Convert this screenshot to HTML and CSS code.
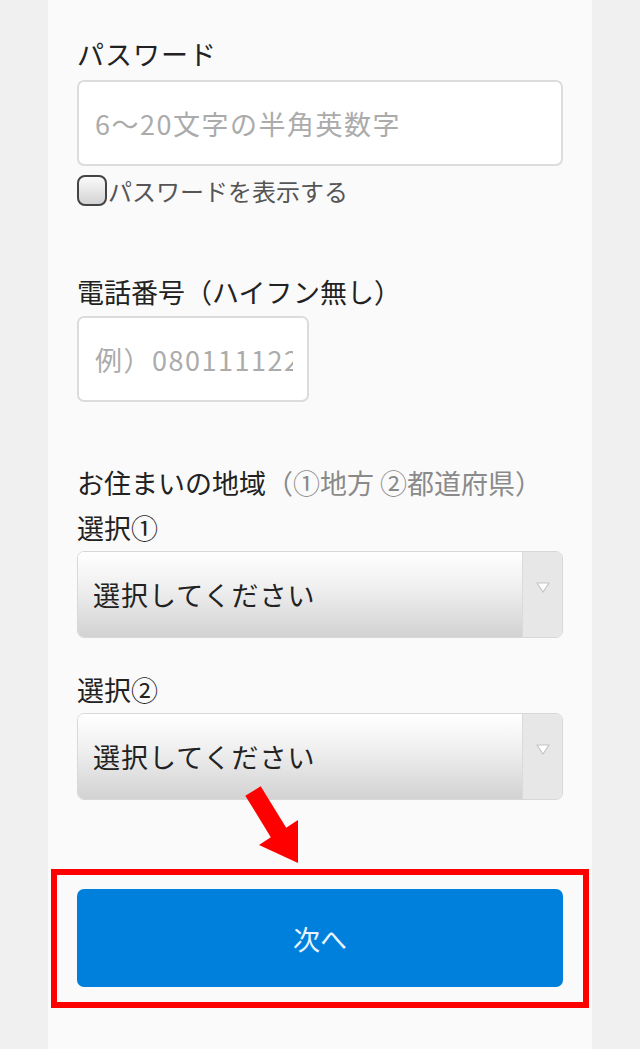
FILE: index.html
```html
<!DOCTYPE html>
<html lang="ja">
<head>
<meta charset="utf-8">
<title>登録</title>
<link rel="stylesheet" href="styles.css">
</head>
<body>
<div class="panel">
  <label class="label pw-label">パスワード</label>
  <input class="text-input" type="text" placeholder="6〜20文字の半角英数字">
  <label class="show-pass"><span class="checkbox"></span>パスワードを表示する</label>

  <label class="label phone-label">電話番号（ハイフン無し）</label>
  <input class="text-input phone-input" type="text" placeholder="例）08011112222">

  <div class="label region-label">お住まいの地域<span class="muted">（①地方 ②都道府県）</span></div>
  <div class="label sub-label">選択①</div>
  <div class="select">
    <div class="select-text">選択してください</div>
    <div class="select-btn"><svg width="14" height="11" viewBox="0 0 14 11"><polygon points="1,1 13,1 7,10" fill="#fff" stroke="#c4c4c4" stroke-width="1.2" stroke-linejoin="round"/></svg></div>
  </div>
  <div class="label sub-label second">選択②</div>
  <div class="select">
    <div class="select-text">選択してください</div>
    <div class="select-btn"><svg width="14" height="11" viewBox="0 0 14 11"><polygon points="1,1 13,1 7,10" fill="#fff" stroke="#c4c4c4" stroke-width="1.2" stroke-linejoin="round"/></svg></div>
  </div>

  <div class="next-box">
    <div class="next-btn">次へ</div>
  </div>

  <svg class="arrow" width="100" height="100" viewBox="0 0 100 100">
    <polygon points="15.3,15.7 30.7,6.3 56.2,47.8 68,40 68,83 29,65 40.8,57.2" fill="#ff0000"/>
  </svg>
</div>
</body>
</html>
```

FILE: styles.css
```css
html, body {
  margin: 0;
  padding: 0;
}
body {
  background: #f0f0f0;
  font-family: "Noto Sans CJK JP", "Noto Sans", sans-serif;
}
.panel {
  position: relative;
  margin: 0 48px;
  background: #fafafa;
  min-height: 1049px;
  box-sizing: border-box;
  padding: 36px 29px 0;
}
.label {
  display: block;
  font-size: 27px;
  line-height: 36px;
  color: #222;
}
.pw-label {
  margin-bottom: 8px;
  letter-spacing: 1px;
}
.text-input {
  display: block;
  width: 100%;
  height: 86px;
  box-sizing: border-box;
  border: 2px solid #dcdcdc;
  border-radius: 7px;
  background: #fff;
  padding: 0 14px 0 16px;
  margin: 0;
  font-family: "Noto Sans CJK JP", sans-serif;
  font-size: 27px;
  letter-spacing: 1.5px;
  color: #222;
  outline: none;
}
.text-input::placeholder {
  color: #ababab;
}
.show-pass {
  display: flex;
  align-items: center;
  margin-top: 8px;
  height: 32px;
  font-size: 24px;
  color: #555;
}
.checkbox {
  width: 30px;
  height: 31px;
  box-sizing: border-box;
  border: 2px solid #444;
  border-radius: 8px;
  background: linear-gradient(#fbfbfb, #d2d2d2);
  margin-right: 1px;
}
.phone-label {
  margin-top: 68px;
  margin-bottom: 6px;
}
.phone-input {
  width: 232px;
}
.region-label {
  margin-top: 63px;
}
.muted {
  color: #8a8a8a;
}
.sub-label {
  margin-top: 9px;
  margin-bottom: 5px;
}
.sub-label.second {
  margin-top: 34px;
}
.select {
  display: flex;
  height: 87px;
  box-sizing: border-box;
  border: 1px solid #d8d8d8;
  border-radius: 7px;
  overflow: hidden;
}
.select-text {
  flex: 1;
  display: flex;
  align-items: center;
  padding-left: 15px;
  background: linear-gradient(#ffffff, #f0f0f0 40%, #d2d2d2);
  font-size: 27px;
  letter-spacing: 1px;
  color: #222;
}
.select-btn {
  width: 40px;
  background: #e7e7e7;
  border-left: 1px solid #dadada;
  display: flex;
  justify-content: center;
  padding-top: 30px;
  box-sizing: border-box;
}
.next-box {
  margin: 69px -26px 0;
  border: 6px solid #ff0000;
  padding: 14px 20px 15px;
}
.next-btn {
  height: 98px;
  background: #0080dd;
  border-radius: 7px;
  color: #eaf4ff;
  font-size: 27px;
  display: flex;
  align-items: center;
  justify-content: center;
}
.arrow {
  position: absolute;
  left: 182px;
  top: 780px;
}
```
